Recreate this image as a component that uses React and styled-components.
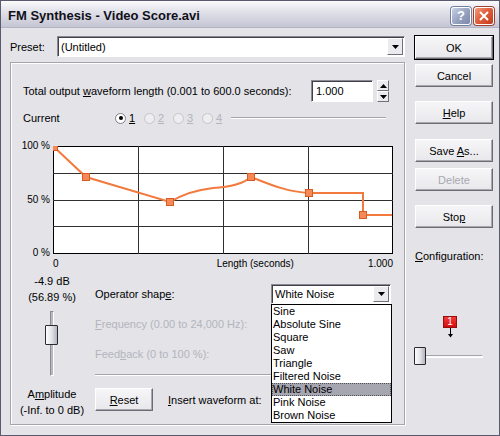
import styled, { createGlobalStyle } from "styled-components";

const FACE = "#e3e3e8";
const ORANGE = "#f27a3e";

const GlobalStyle = createGlobalStyle`
  html, body {
    margin: 0;
    padding: 0;
    background: ${FACE};
  }
  * {
    box-sizing: border-box;
  }
  body {
    font-family: "Liberation Sans", Arial, sans-serif;
    font-size: 11px;
    color: #000;
  }
`;

const Window = styled.div`
  width: 500px;
  height: 436px;
  border: 1px solid #5a5a6e;
  background: ${FACE};
  display: flex;
  flex-direction: column;
  overflow: hidden;
`;

const TitleBar = styled.div`
  height: 27px;
  flex-shrink: 0;
  display: flex;
  align-items: center;
  justify-content: space-between;
  padding: 0 5px 0 7px;
  background: linear-gradient(#fbfbfd, #e4e4ec 35%, #cfcfdc 80%, #c4c4d2);
  border-bottom: 1px solid #b4b4c4;
`;

const Title = styled.div`
  font-weight: bold;
  font-size: 13px;
  color: #101018;
  padding-top: 2px;
`;

const TitleButtons = styled.div`
  display: flex;
  gap: 3px;
  padding-top: 3px;
`;

const TitleBtn = styled.div`
  width: 20px;
  height: 18px;
  border-radius: 3px;
  border: 1px solid #fff;
  display: flex;
  align-items: center;
  justify-content: center;
  color: #fff;
  font-weight: bold;
  font-size: 13px;
  background: ${({ $kind }) =>
    $kind === "close"
      ? "linear-gradient(135deg, #f29a7c, #e0603c 45%, #c23a1c)"
      : "linear-gradient(135deg, #c8d0e4, #99a4c2 50%, #7a86aa)"};
  box-shadow: 0 0 0 1px ${({ $kind }) => ($kind === "close" ? "#a04030" : "#7080a0")};
`;

const Body = styled.div`
  flex: 1;
  display: flex;
  padding: 8px 5px 0 9px;
`;

const Main = styled.div`
  width: 395px;
  display: flex;
  flex-direction: column;
`;

const PresetRow = styled.div`
  display: flex;
  align-items: center;
  height: 21px;
`;

const PresetLabel = styled.span`
  width: 47px;
`;

const Combo = styled.div`
  position: relative;
  width: ${({ $width }) => ($width ? `${$width}px` : "auto")};
  flex: ${({ $width }) => ($width ? "none" : "1")};
  height: ${({ $h }) => $h || 21}px;
  background: #fff;
  border: 1px solid;
  border-color: #8a8a94 #fff #fff #8a8a94;
  box-shadow: inset 1px 1px #404048;
  display: flex;
  align-items: center;
  padding-left: 3px;
`;

const ComboText = styled.span`
  flex: 1;
`;

const ArrowBtn = styled.div`
  width: 16px;
  height: calc(100% - 2px);
  margin-right: 1px;
  background: #ebebef;
  border: 1px solid;
  border-color: #fff #707078 #707078 #fff;
  display: flex;
  align-items: center;
  justify-content: center;
`;

const Arrow = ({ up }) => (
  <svg width="7" height="4" viewBox="0 0 7 4">
    <path d={up ? "M0 4 L3.5 0 L7 4 Z" : "M0 0 L7 0 L3.5 4 Z"} fill="#000" />
  </svg>
);

const Panel = styled.div`
  margin-top: 5px;
  height: 363px;
  border: 1px solid #a4a4ae;
  box-shadow: inset 1px 1px #fff, 1px 1px #fff;
  padding: 17px 0 0 12px;
  display: flex;
  flex-direction: column;
`;

const LengthRow = styled.div`
  display: flex;
  align-items: center;
  height: 22px;
`;

const LengthLabel = styled.span`
  width: 288px;
`;

const NumInput = styled.div`
  width: 62px;
  height: 22px;
  background: #fff;
  border: 1px solid;
  border-color: #8a8a94 #fff #fff #8a8a94;
  box-shadow: inset 1px 1px #404048;
  padding: 4px 0 0 4px;
`;

const Spin = styled.div`
  margin-left: 4px;
  width: 12px;
  height: 22px;
  display: flex;
  flex-direction: column;
`;

const SpinHalf = styled.div`
  flex: 1;
  background: #ebebef;
  border: 1px solid;
  border-color: #fff #707078 #707078 #fff;
  display: flex;
  align-items: center;
  justify-content: center;
`;

const CurrentRow = styled.div`
  margin-top: 7px;
  height: 18px;
  display: flex;
  align-items: center;
`;

const CurrentLabel = styled.span`
  width: 92px;
`;

const RadioItem = styled.span`
  display: flex;
  align-items: center;
  width: 29px;
  color: ${({ $disabled }) => ($disabled ? "#b4b4bc" : "#000")};
`;

const RadioDot = styled.span`
  width: 11px;
  height: 11px;
  border-radius: 50%;
  background: ${({ $disabled }) => ($disabled ? "#eeeef0" : "#fff")};
  border: 1px solid ${({ $disabled }) => ($disabled ? "#c4c4cc" : "#808088")};
  margin-right: 3px;
  display: flex;
  align-items: center;
  justify-content: center;
  &::after {
    content: "";
    display: ${({ $checked }) => ($checked ? "block" : "none")};
    width: 4px;
    height: 4px;
    border-radius: 50%;
    background: #000;
  }
`;

const Key = styled.u`
  text-decoration: underline;
`;

const EtchLine = styled.div`
  flex: ${({ $w }) => ($w ? "none" : "1")};
  width: ${({ $w }) => ($w ? `${$w}px` : "auto")};
  height: 2px;
  border-top: 1px solid #a4a4ae;
  border-bottom: 1px solid #fff;
`;

const GraphGrid = styled.div`
  margin-top: 19px;
  display: grid;
  grid-template-columns: 30px 340px;
  grid-template-rows: 108px 16px;
`;

const YLabels = styled.div`
  display: flex;
  flex-direction: column;
  justify-content: space-between;
  align-items: flex-end;
  padding-right: 3px;
  font-size: 10px;
  white-space: nowrap;
  margin-top: -6px;
  height: 118px;
`;

const XLabels = styled.div`
  grid-column: 2;
  display: flex;
  justify-content: space-between;
  align-items: center;
  font-size: 10px;
  padding-top: 2px;
`;

const XCenter = styled.span`
  margin-left: 84px;
`;

const Lower = styled.div`
  margin-top: 3px;
  display: flex;
`;

const AmpCol = styled.div`
  width: 74px;
  margin-left: -8px;
  display: flex;
  flex-direction: column;
  align-items: center;
  text-align: center;
  line-height: 16px;
  white-space: nowrap;
`;

const VSlider = styled.div`
  position: relative;
  margin-top: 6px;
  width: 14px;
  height: 65px;
  display: flex;
  justify-content: center;
`;

const VTrack = styled.div`
  width: 4px;
  height: 100%;
  background: #b8b8c0;
  border: 1px solid;
  border-color: #8a8a94 #fff #fff #8a8a94;
`;

const Thumb = styled.div`
  position: absolute;
  left: ${({ $left }) => $left}px;
  top: ${({ $top }) => $top}px;
  width: ${({ $w }) => $w}px;
  height: ${({ $h }) => $h}px;
  border: 1px solid #2a2a30;
  border-radius: 1px;
  background: linear-gradient(90deg, #fdfdfd, #e4e4ea 50%, #b4b4bc);
`;

const AmpText = styled.div`
  margin-top: ${({ $mt }) => $mt || 0}px;
`;

const OpCol = styled.div`
  margin-left: 6px;
  width: 296px;
  display: flex;
  flex-direction: column;
`;

const OpRow = styled.div`
  margin-top: 10px;
  height: 21px;
  display: flex;
  align-items: center;
  justify-content: space-between;
`;

const DisabledText = styled.div`
  margin-top: ${({ $mt }) => $mt}px;
  line-height: 16px;
  color: #b4b4bc;
`;

const Separator = styled(EtchLine)`
  margin-top: 12px;
  flex: none;
  width: 296px;
`;

const ResetRow = styled.div`
  margin-top: 12px;
  display: flex;
  align-items: center;
  gap: 15px;
`;

const Button = styled.div`
  width: ${({ $w }) => $w || 78}px;
  height: 23px;
  margin-top: ${({ $mt }) => $mt || 0}px;
  display: flex;
  align-items: center;
  justify-content: center;
  background: linear-gradient(#f6f6f8, #e8e8ec);
  border: 1px solid;
  border-color: #fff #6c6c74 #6c6c74 #fff;
  box-shadow: ${({ $default }) =>
    $default ? "0 0 0 1px #000, inset -1px -1px #a8a8b0" : "inset -1px -1px #a8a8b0"};
  color: ${({ $disabled }) => ($disabled ? "#a8a8b0" : "#000")};
`;

const DropList = styled.div`
  position: absolute;
  top: 19px;
  left: -1px;
  width: 121px;
  background: #fff;
  border: 1px solid #000;
  z-index: 2;
`;

const DropItem = styled.div`
  height: 13px;
  line-height: 13px;
  padding-left: 1px;
  background: ${({ $sel }) => ($sel ? "#a6a6b0" : "transparent")};
  outline: ${({ $sel }) => ($sel ? "1px dotted #505058" : "none")};
  outline-offset: -1px;
`;

const Side = styled.div`
  margin-left: 10px;
  width: 78px;
  display: flex;
  flex-direction: column;
`;

const ConfigLabel = styled.div`
  margin-top: 20px;
  line-height: 16px;
  white-space: nowrap;
`;

const Marker = styled.div`
  margin: 52px 0 0 28px;
  display: flex;
  flex-direction: column;
  align-items: center;
  width: 14px;
`;

const MarkerBox = styled.div`
  width: 14px;
  height: 12px;
  background: linear-gradient(#f43a3a, #d40c0c);
  border: 1px solid #901010;
  color: #fff;
  font-size: 10px;
  line-height: 10px;
  text-align: center;
`;

const HSlider = styled.div`
  position: relative;
  margin-top: 9px;
  height: 18px;
  display: flex;
  align-items: center;
`;

const HTrack = styled.div`
  width: 68px;
  height: 3px;
  background: #f8f8fa;
  border: 1px solid;
  border-color: #a4a4ae #fff #fff #a4a4ae;
`;

const SHAPES = [
  "Sine",
  "Absolute Sine",
  "Square",
  "Saw",
  "Triangle",
  "Filtered Noise",
  "White Noise",
  "Pink Noise",
  "Brown Noise",
];

const POINTS = [
  [1, 1],
  [33, 31],
  [117, 56],
  [198, 31],
  [256, 47],
  [310, 69],
];

const Graph = () => (
  <svg width="340" height="108" viewBox="0 0 340 108">
    <rect x="0.5" y="0.5" width="339" height="107" fill="#fff" stroke="#000" />
    {[85, 170, 255].map((x) => (
      <line key={x} x1={x + 0.5} y1="0" x2={x + 0.5} y2="108" stroke="#303030" />
    ))}
    {[27, 54, 80].map((y) => (
      <line key={y} x1="0" y1={y + 0.5} x2="340" y2={y + 0.5} stroke="#303030" />
    ))}
    <path
      d="M1 1 L33 31 L117 56 C130 48 142 44 160 42 C178 41 190 38 198 31 C216 38 234 46 256 47 L310 47 L310 69 L339 69"
      fill="none"
      stroke={ORANGE}
      strokeWidth="2"
    />
    {POINTS.map(([x, y]) => (
      <rect
        key={x}
        x={x - 3.5}
        y={y - 3.5}
        width="7"
        height="7"
        fill="#f58a58"
        stroke="#d85a24"
      />
    ))}
  </svg>
);

const App = () => (
  <>
    <GlobalStyle />
    <Window>
      <TitleBar>
        <Title>FM Synthesis - Video Score.avi</Title>
        <TitleButtons>
          <TitleBtn $kind="help">?</TitleBtn>
          <TitleBtn $kind="close">
            <svg width="10" height="10" viewBox="0 0 10 10">
              <path d="M1 1 L9 9 M9 1 L1 9" stroke="#fff" strokeWidth="2" />
            </svg>
          </TitleBtn>
        </TitleButtons>
      </TitleBar>

      <Body>
        <Main>
          <PresetRow>
            <PresetLabel>Preset:</PresetLabel>
            <Combo>
              <ComboText>(Untitled)</ComboText>
              <ArrowBtn>
                <Arrow />
              </ArrowBtn>
            </Combo>
          </PresetRow>

          <Panel>
            <LengthRow>
              <LengthLabel>
                Total output <Key>w</Key>aveform length (0.001 to 600.0 seconds):
              </LengthLabel>
              <NumInput>1.000</NumInput>
              <Spin>
                <SpinHalf>
                  <Arrow up />
                </SpinHalf>
                <SpinHalf>
                  <Arrow />
                </SpinHalf>
              </Spin>
            </LengthRow>

            <CurrentRow>
              <CurrentLabel>Current</CurrentLabel>
              {[1, 2, 3, 4].map((n) => (
                <RadioItem key={n} $disabled={n > 1}>
                  <RadioDot $checked={n === 1} $disabled={n > 1} />
                  <Key>{n}</Key>
                </RadioItem>
              ))}
              <EtchLine $w={155} />
            </CurrentRow>

            <GraphGrid>
              <YLabels>
                <span>100 %</span>
                <span>50 %</span>
                <span>0 %</span>
              </YLabels>
              <Graph />
              <XLabels>
                <span>0</span>
                <XCenter>Length (seconds)</XCenter>
                <span>1.000</span>
              </XLabels>
            </GraphGrid>

            <Lower>
              <AmpCol>
                <AmpText>-4.9 dB</AmpText>
                <AmpText>(56.89 %)</AmpText>
                <VSlider>
                  <VTrack />
                  <Thumb $left={0} $top={14} $w={13} $h={20} />
                </VSlider>
                <AmpText $mt={10}>
                  A<Key>m</Key>plitude
                </AmpText>
                <AmpText>(-Inf. to 0 dB)</AmpText>
              </AmpCol>

              <OpCol>
                <OpRow>
                  <span>
                    Operator shap<Key>e</Key>:
                  </span>
                  <Combo $width={120} $h={20}>
                    <ComboText>White Noise</ComboText>
                    <ArrowBtn>
                      <Arrow />
                    </ArrowBtn>
                    <DropList>
                      {SHAPES.map((s) => (
                        <DropItem key={s} $sel={s === "White Noise"}>
                          {s}
                        </DropItem>
                      ))}
                    </DropList>
                  </Combo>
                </OpRow>
                <DisabledText $mt={12}>
                  <Key>F</Key>requency (0.00 to 24,000 Hz):
                </DisabledText>
                <DisabledText $mt={14}>
                  Feed<Key>b</Key>ack (0 to 100 %):
                </DisabledText>
                <Separator />
                <ResetRow>
                  <Button $w={58}>
                    <span>
                      <Key>R</Key>eset
                    </span>
                  </Button>
                  <span>
                    <Key>I</Key>nsert waveform at:
                  </span>
                </ResetRow>
              </OpCol>
            </Lower>
          </Panel>
        </Main>

        <Side>
          <Button $default>OK</Button>
          <Button $mt={5}>Cancel</Button>
          <Button $mt={14}>
            <span>
              <Key>H</Key>elp
            </span>
          </Button>
          <Button $mt={15}>
            <span>
              Save <Key>A</Key>s...
            </span>
          </Button>
          <Button $mt={6} $disabled>
            Delete
          </Button>
          <Button $mt={14}>
            <span>
              Sto<Key>p</Key>
            </span>
          </Button>
          <ConfigLabel>
            <Key>C</Key>onfiguration:
          </ConfigLabel>
          <Marker>
            <MarkerBox>1</MarkerBox>
            <svg width="7" height="10" viewBox="0 0 7 10">
              <path d="M3.5 0 V9" stroke="#000" strokeWidth="1" />
              <path d="M1 6 L3.5 9.5 L6 6 Z" fill="#000" />
            </svg>
          </Marker>
          <HSlider>
            <HTrack />
            <Thumb $left={-1} $top={0} $w={12} $h={18} />
          </HSlider>
        </Side>
      </Body>
    </Window>
  </>
);

export default App;
